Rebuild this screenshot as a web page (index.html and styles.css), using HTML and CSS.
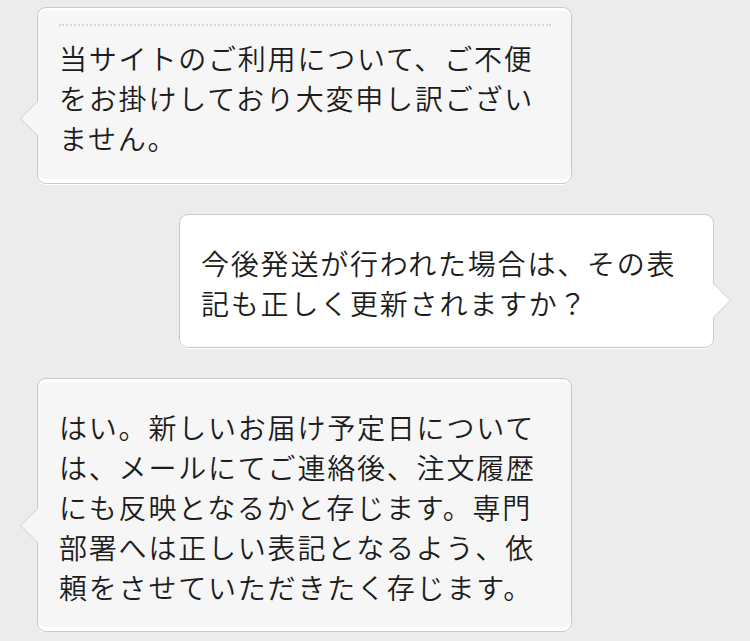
FILE: index.html
```html
<!DOCTYPE html>
<html lang="ja">
<head>
  <meta charset="utf-8" />
  <meta name="viewport" content="width=device-width, initial-scale=1" />
  <title>お問い合わせ</title>
  <link rel="stylesheet" href="styles.css">
</head>
<body>
  <div class="chat">
    <div class="bubble them first tail-a">
      <p class="msg">当サイトのご利用について、ご不便をお掛けしており大変申し訳ございません。</p>
    </div>
    <div class="bubble me tail-b">
      <p class="msg">今後発送が行われた場合は、その表記も正しく更新されますか？</p>
    </div>
    <div class="bubble them tail-c">
      <p class="msg">はい。新しいお届け予定日については、メールにてご連絡後、注文履歴にも反映となるかと存じます。専門部署へは正しい表記となるよう、依頼をさせていただきたく存じます。</p>
    </div>
  </div>
</body>
</html>
```

FILE: styles.css
```css
:root{
  --bg:#ececec;
  --line:#c9c9c9;
  --them:#f6f6f6;
  --me:#ffffff;
  --text:#1c1c1c;
}

* { box-sizing: border-box; }

body{
  margin:0; background:var(--bg); color:var(--text);
  font-family: "Noto Sans CJK JP", "Noto Sans", sans-serif;
}

.chat{
  display:flex; flex-direction:column; gap:30px;
  padding:7px 0 0;
}

.bubble{
  position:relative; width:535px;
  padding:28px 20px 24px 21px;
  border:1px solid var(--line); border-radius:9px;
  box-shadow: inset 0 -4px 0 rgba(255,255,255,.9), inset 0 3px 0 rgba(255,255,255,.9), 0 1px 0 #fff;
}
.them{ margin-left:37px; background:var(--them); }
.me{ margin-left:179px; background:var(--me); }

.first{ height:177px; padding-top:12px; }
.first::before{
  content:""; display:block; height:0; margin:4px 0 12px;
  border-top:2px dotted #d4d4d4;
}

.msg{
  margin:0; font-size:28px; font-weight:350; line-height:40px; letter-spacing:1.8px;
  line-break:strict;
}

/* tails */
.bubble::after{
  content:""; position:absolute; width:24px; height:24px;
  transform:rotate(45deg);
}
.them::after{
  left:-13px; background:var(--them);
  border-left:1px solid #d6d6d6; border-bottom:1px solid #d6d6d6;
}
.me::after{
  right:-13px; background:var(--me);
  border-right:1px solid #d6d6d6; border-top:1px solid #d6d6d6;
}
.tail-a::after{ top:98px; }
.tail-b::after{ top:73px; }
.tail-c::after{ top:134px; }
```
